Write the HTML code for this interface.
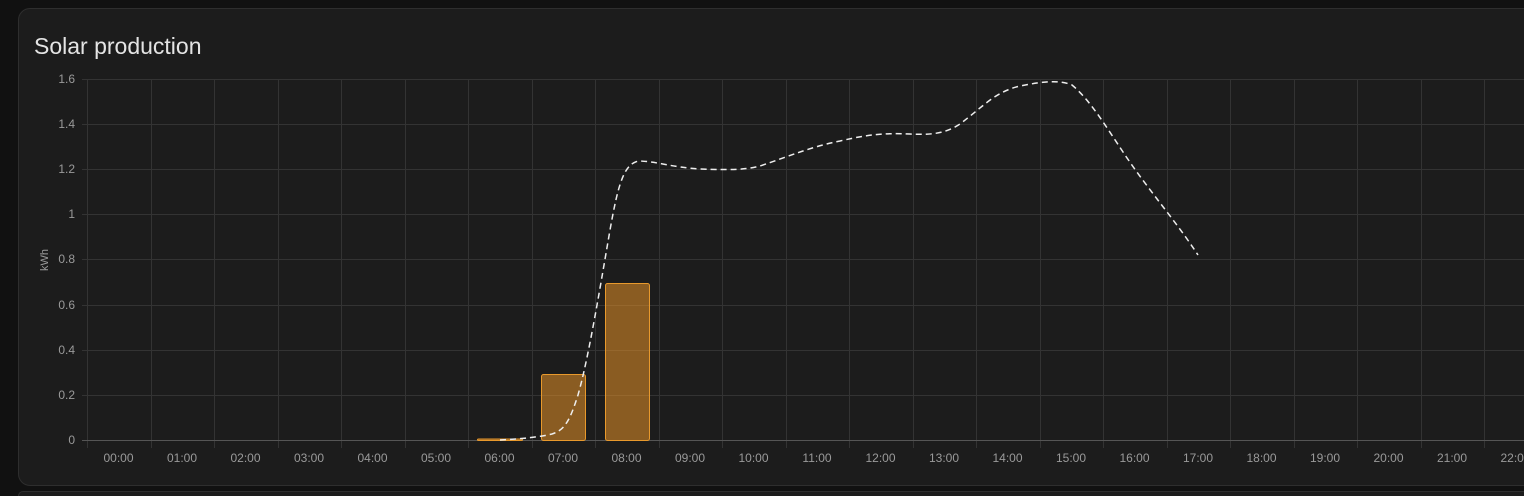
<!DOCTYPE html>
<html><head><style>
html,body{margin:0;padding:0;background:#111;width:1524px;height:496px;overflow:hidden;font-family:"Liberation Sans",sans-serif;}
.card{position:absolute;left:18px;top:8px;width:1540px;height:476px;background:#1c1c1c;border:1px solid #2e2e2e;border-radius:12px;}
.card2{position:absolute;left:18px;top:491px;width:1540px;height:4px;background:#1c1c1c;border:1px solid #2e2e2e;border-bottom:none;border-radius:12px 12px 0 0;}
h1{position:absolute;left:15px;top:24px;margin:0;font-weight:400;font-size:23px;color:#e4e4e4;}
svg{position:absolute;left:0;top:0;}
</style></head><body>
<div class="card"><h1>Solar production</h1></div>
<div class="card2"></div>
<svg width="1524" height="496" font-family="Liberation Sans, sans-serif" font-size="12" fill="#9a9a9a">
<g stroke="#333" stroke-width="1">
<line x1="82" y1="79.5" x2="1524" y2="79.5"/><line x1="82" y1="124.5" x2="1524" y2="124.5"/><line x1="82" y1="169.5" x2="1524" y2="169.5"/><line x1="82" y1="214.5" x2="1524" y2="214.5"/><line x1="82" y1="259.5" x2="1524" y2="259.5"/><line x1="82" y1="305.5" x2="1524" y2="305.5"/><line x1="82" y1="350.5" x2="1524" y2="350.5"/><line x1="82" y1="395.5" x2="1524" y2="395.5"/>
</g>
<g stroke="#333" id="v"></g>
<line x1="82" y1="440.5" x2="1524" y2="440.5" stroke="#555"/>
<g text-anchor="end">
<text x="75" y="83">1.6</text><text x="75" y="128">1.4</text><text x="75" y="173">1.2</text><text x="75" y="218">1</text><text x="75" y="263">0.8</text><text x="75" y="309">0.6</text><text x="75" y="354">0.4</text><text x="75" y="399">0.2</text><text x="75" y="444">0</text>
</g>
<text x="48" y="260" font-size="11" transform="rotate(-90 48 260)" text-anchor="middle">kWh</text>
<g fill="rgba(230,145,40,0.55)" stroke="#e8992c" stroke-width="1">
<rect x="477.5" y="439" width="45" height="1.5" rx="1"/>
<rect x="541.5" y="374.5" width="44" height="66" rx="2"/>
<rect x="605.5" y="283.5" width="44" height="157" rx="2"/>
</g>
<path d="M500,440 C520,439 540,437 552,434 C565,430 570,420 578,395 C588,360 598,300 610,230 C618,185 624,162 640,161 C660,162 670,167 700,169 C730,170 745,170 760,166 C790,156 810,147 840,141 C870,134 885,133 910,134 C930,135 945,134 960,124 C985,105 995,92 1020,86 C1045,81 1060,80 1072,85 C1090,100 1105,125 1125,155 C1150,192 1175,220 1198,255" fill="none" stroke="#eee" stroke-width="1.5" stroke-dasharray="6,4"/>
<g id="t" text-anchor="middle"></g>
</svg>
<script>
var v=document.getElementById('v'),t=document.getElementById('t'),ns='http://www.w3.org/2000/svg';
for(var i=0;i<24;i++){var x=Math.round(87+63.5*i)+0.5;var l=document.createElementNS(ns,'line');l.setAttribute('x1',x);l.setAttribute('x2',x);l.setAttribute('y1',79);l.setAttribute('y2',448);v.appendChild(l);
var tx=document.createElementNS(ns,'text');tx.setAttribute('x',118.5+63.5*i);tx.setAttribute('y',462);tx.textContent=(i<10?'0':'')+i+':00';t.appendChild(tx);}
</script>
</body></html>
